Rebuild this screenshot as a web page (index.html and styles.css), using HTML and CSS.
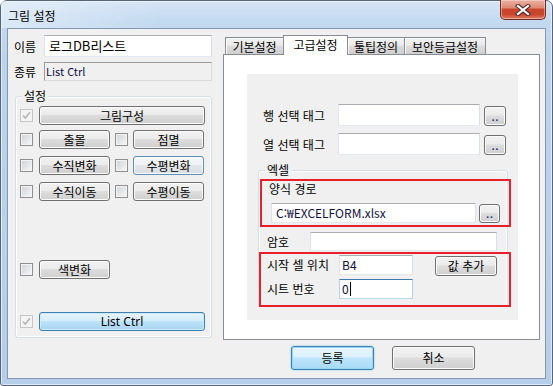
FILE: index.html
```html
<!DOCTYPE html>
<html lang="ko">
<head>
    <meta charset="UTF-8">
    <title>그림 설정</title>
    <link rel="stylesheet" href="styles.css">
</head>
<body>
    <div class="window">
        <div class="titlebar">
            <span class="title">그림 설정</span>
            <div class="close-btn">
                <svg width="16" height="12" viewBox="0 0 16 12">
                    <path d="M3 2 L13 10 M13 2 L3 10" stroke="#4a2a28" stroke-width="4.2" stroke-linecap="square" fill="none"/>
                    <path d="M3 2 L13 10 M13 2 L3 10" stroke="#fff" stroke-width="2.2" stroke-linecap="square" fill="none"/>
                </svg>
            </div>
        </div>

        <div class="client">
            <div class="left-col">
                <div class="field-row">
                    <span class="field-label">이름</span>
                    <div class="edit name-edit">로그DB리스트</div>
                </div>
                <div class="field-row kind-row">
                    <span class="field-label">종류</span>
                    <div class="static-box">List Ctrl</div>
                </div>

                <div class="groupbox setting-group">
                    <span class="group-title">설정</span>
                    <div class="opt-row">
                        <span class="check disabled"><svg width="11" height="11" viewBox="0 0 11 11"><path d="M2 5.5 L4.3 8 L9 2.3" stroke="#b4b4b4" stroke-width="1.5" fill="none"/></svg></span>
                        <span class="btn btn-wide">그림구성</span>
                    </div>
                    <div class="opt-row row-2">
                        <span class="check"></span>
                        <span class="btn btn-half">출몰</span>
                        <span class="check check-second"></span>
                        <span class="btn btn-half">점멸</span>
                    </div>
                    <div class="opt-row row-3">
                        <span class="check"></span>
                        <span class="btn btn-half">수직변화</span>
                        <span class="check check-second"></span>
                        <span class="btn btn-half btn-hot">수평변화</span>
                    </div>
                    <div class="opt-row row-3">
                        <span class="check"></span>
                        <span class="btn btn-half">수직이동</span>
                        <span class="check check-second"></span>
                        <span class="btn btn-half">수평이동</span>
                    </div>
                    <div class="opt-row row-5">
                        <span class="check"></span>
                        <span class="btn btn-half">색변화</span>
                    </div>
                    <div class="opt-row row-6">
                        <span class="check disabled"><svg width="11" height="11" viewBox="0 0 11 11"><path d="M2 5.5 L4.3 8 L9 2.3" stroke="#b4b4b4" stroke-width="1.5" fill="none"/></svg></span>
                        <span class="btn btn-wide btn-default">List Ctrl</span>
                    </div>
                </div>
            </div>

            <div class="right-col">
                <div class="tabs">
                    <span class="tab tab-basic">기본설정</span>
                    <span class="tab tab-active">고급설정</span>
                    <span class="tab tab-tip">툴팁정의</span>
                    <span class="tab tab-security">보안등급설정</span>
                </div>
                <div class="tab-panel">
                    <div class="sub-dialog">
                        <div class="tag-row">
                            <span class="tag-label">행 선택 태그</span>
                            <div class="edit tag-edit"></div>
                            <span class="btn btn-dots">..</span>
                        </div>
                        <div class="tag-row tag-row-2">
                            <span class="tag-label">열 선택 태그</span>
                            <div class="edit tag-edit"></div>
                            <span class="btn btn-dots">..</span>
                        </div>

                        <div class="groupbox excel-group">
                            <span class="group-title">엑셀</span>
                            <div class="mark mark-path">
                                <div class="path-label">양식 경로</div>
                                <div class="path-row">
                                    <div class="edit path-edit">C:₩EXCELFORM.xlsx</div>
                                    <span class="btn btn-dots btn-dots-small">..</span>
                                </div>
                            </div>
                            <div class="pw-row">
                                <span class="pw-label">암호</span>
                                <div class="edit pw-edit"></div>
                            </div>
                            <div class="mark mark-cell">
                                <div class="cell-row">
                                    <span class="cell-label">시작 셀 위치</span>
                                    <div class="edit cell-edit">B4</div>
                                    <span class="btn btn-add">값 추가</span>
                                </div>
                                <div class="cell-row cell-row-2">
                                    <span class="cell-label">시트 번호</span>
                                    <div class="edit cell-edit focused">0<span class="caret"></span></div>
                                </div>
                            </div>
                        </div>
                    </div>
                </div>
                <div class="dialog-buttons">
                    <span class="btn btn-dialog btn-default">등록</span>
                    <span class="btn btn-dialog">취소</span>
                </div>
            </div>
        </div>
    </div>
</body>
</html>
```

FILE: styles.css
```css
* {
    box-sizing: border-box;
}

body {
    margin: 0;
    background-color: #fff;
    font-family: "Noto Sans CJK KR", "Noto Sans", sans-serif;
    font-size: 12px;
    color: #000;
}

.window {
    width: 553px;
    height: 386px;
    border: 1px solid #56657a;
    border-radius: 7px 7px 3px 3px;
    padding: 0 6px 6px;
    display: flex;
    flex-direction: column;
    background: linear-gradient(180deg, #d5e4f4 0px, #c3d9f0 20px, #bcd3ec 60px, #b6cee9 100%);
    box-shadow: inset 0 0 0 1px rgba(255, 255, 255, 0.55);
}

.titlebar {
    height: 27px;
    display: flex;
    justify-content: space-between;
    align-items: flex-start;
    background: linear-gradient(90deg, rgba(236, 244, 252, 0.6) 0px, rgba(255, 255, 255, 0) 160px);
    margin: 0 -6px;
    padding: 0 6px;
}

.title {
    margin: 6px 0 0 1px;
    line-height: 17px;
}

.close-btn {
    width: 46px;
    height: 20px;
    margin-top: -1px;
    border: 1px solid #6b2d26;
    border-top: none;
    border-radius: 0 0 5px 5px;
    background: linear-gradient(180deg, #eab1a4 0%, #dd8a76 40%, #c8452e 50%, #c9442c 75%, #de7f66 100%);
    box-shadow: inset 0 0 0 1px rgba(255, 220, 210, 0.5);
    display: flex;
    justify-content: center;
    align-items: center;
}

.client {
    flex: 1;
    display: flex;
    border: 1px solid #8397ae;
    background-color: #f0f0f0;
}

/* left side */
.left-col {
    width: 204px;
    padding-top: 6px;
}

.field-row {
    display: flex;
    align-items: center;
}

.field-label {
    width: 36px;
    padding-left: 6px;
}

.kind-row {
    margin-top: 5px;
}

.edit {
    background: #fff;
    border: 1px solid;
    border-color: #abadb3 #dbdfe6 #e3e9ef #e2e3ea;
    padding-left: 4px;
    color: #101040;
    white-space: nowrap;
}

.name-edit {
    width: 168px;
    height: 22px;
    font-size: 13px;
    line-height: 20px;
    color: #000;
}

.static-box {
    width: 168px;
    height: 19px;
    border: 1px solid;
    border-color: #9c9c9c #dadada #dadada #9c9c9c;
    line-height: 17px;
    padding-left: 1px;
    font-size: 11px;
    color: #10104a;
}

.groupbox {
    position: relative;
    border: 1px solid #d5dfe5;
    border-radius: 3px;
    box-shadow: inset 0 0 0 1px #fff;
}

.group-title {
    position: absolute;
    top: -9px;
    left: 6px;
    padding: 0 2px;
    background-color: #f0f0f0;
    line-height: 16px;
}

.setting-group {
    margin: 15px 0 0 7px;
    height: 242px;
    padding: 9px 0 0 4px;
}

.opt-row {
    display: flex;
    align-items: center;
    height: 19px;
}

.row-2 {
    margin-top: 5px;
}

.row-3 {
    margin-top: 7px;
}

.row-5 {
    margin-top: 59px;
}

.row-6 {
    margin-top: 33px;
}

.check {
    width: 13px;
    height: 13px;
    margin-right: 6px;
    border: 1px solid #8f8f8f;
    background: linear-gradient(135deg, #cfd2d6 0%, #f7f7f7 100%);
    box-shadow: inset 0 0 0 1px #f4f4f4;
    display: flex;
}

.check-second {
    margin-left: 5px;
    margin-right: 5px;
}

.check.disabled {
    border-color: #c5c5c5;
    background: #f4f4f4;
    box-shadow: none;
}

.btn {
    display: flex;
    justify-content: center;
    align-items: center;
    height: 19px;
    border: 1px solid #707070;
    border-radius: 3px;
    background: linear-gradient(180deg, #f2f2f2 0%, #ebebeb 45%, #dddddd 50%, #cfcfcf 100%);
    box-shadow: inset 0 0 0 1px #fbfbfb;
    line-height: 16px;
    white-space: nowrap;
}

.btn-wide {
    width: 166px;
}

.btn-half {
    width: 71px;
}

.btn-hot {
    border-color: #5d8fb8;
    background: linear-gradient(180deg, #f6f8fa 0%, #eef1f4 45%, #e2e6ea 50%, #d8dde2 100%);
}

.btn-default {
    border-color: #3c7fb1;
    background: linear-gradient(180deg, #e6f4fc 0%, #d6eefb 45%, #bde3f8 50%, #a6d5f2 100%);
    box-shadow: inset 0 0 0 1px #cdeafd;
    font-family: "Noto Sans", sans-serif;
}

/* right side */
.right-col {
    width: 317px;
    margin-left: 11px;
    padding-top: 6px;
}

.tabs {
    display: flex;
    align-items: flex-end;
    height: 19px;
    padding-left: 2px;
}

.tab {
    height: 17px;
    border: 1px solid #898c95;
    border-bottom: none;
    background: linear-gradient(180deg, #f2f2f2 0%, #ebebeb 45%, #dddddd 50%, #cfcfcf 100%);
    box-shadow: inset 1px 1px 0 #fcfcfc;
    display: flex;
    justify-content: center;
    align-items: center;
    line-height: 15px;
}

.tab-basic {
    width: 59px;
}

.tab-active {
    position: relative;
    z-index: 1;
    width: 65px;
    height: 20px;
    margin: 0 0 -1px -1px;
    background: #fff;
    box-shadow: none;
    padding-bottom: 3px;
}

.tab-tip {
    width: 58px;
    margin-left: -1px;
}

.tab-security {
    width: 82px;
    margin-left: -1px;
}

.tab-panel {
    height: 286px;
    border: 1px solid #898c95;
    background-color: #fff;
    padding: 19px 0 0 23px;
}

.sub-dialog {
    width: 271px;
    height: 246px;
    background-color: #f0f0f0;
    padding: 30px 0 0 11px;
}

.tag-row {
    display: flex;
    align-items: center;
    height: 22px;
    margin-left: 5px;
}

.tag-row-2 {
    margin-top: 7px;
}

.tag-label {
    width: 75px;
}

.tag-edit {
    width: 142px;
    height: 22px;
    margin-right: 4px;
}

.btn-dots {
    width: 22px;
    height: 20px;
    margin-top: 1px;
    align-items: flex-end;
    color: #1a2a6a;
    font-family: "Liberation Sans", sans-serif;
    font-weight: bold;
    font-size: 10px;
    line-height: 14px;
    letter-spacing: 1px;
    padding-left: 1px;
}

.excel-group {
    width: 250px;
    height: 137px;
    margin-top: 15px;
    padding-top: 8px;
}

.mark {
    position: relative;
    z-index: 1;
    border: 2px solid #e8202a;
}

.mark-path {
    width: 251px;
    height: 48px;
    margin-left: 1px;
}

.path-label {
    height: 16px;
    line-height: 16px;
    padding-left: 7px;
}

.path-row {
    display: flex;
    margin-top: 6px;
    padding-left: 9px;
}

.path-edit {
    width: 205px;
    height: 20px;
    line-height: 18px;
}

.btn-dots-small {
    width: 21px;
    height: 19px;
    margin-left: 3px;
}

.pw-row {
    display: flex;
    align-items: center;
    margin-top: 5px;
    padding-left: 8px;
}

.pw-label {
    width: 43px;
}

.pw-edit {
    width: 187px;
    height: 19px;
}

.mark-cell {
    width: 252px;
    height: 55px;
    margin-top: 1px;
    padding: 1px 0 0 6px;
}

.cell-row {
    display: flex;
    align-items: flex-start;
}

.cell-row-2 {
    margin-top: 3px;
}

.cell-label {
    width: 72px;
    line-height: 20px;
}

.cell-edit {
    width: 74px;
    height: 20px;
    line-height: 18px;
    padding-left: 2px;
}

.cell-edit.focused {
    border-color: #3d7bad #b5cfe7 #b7d9ed #b5cfe7;
}

.caret {
    display: inline-block;
    width: 1px;
    height: 14px;
    margin-left: 1px;
    vertical-align: -2px;
    background-color: #000;
}

.btn-add {
    width: 62px;
    height: 20px;
    margin: 1px 0 0 22px;
}

.dialog-buttons {
    display: flex;
    gap: 18px;
    margin-top: 6px;
    padding-left: 68px;
}

.btn-dialog {
    width: 83px;
    height: 24px;
}

.dialog-buttons .btn-default {
    font-family: "Noto Sans CJK KR", sans-serif;
    border-color: #3c7fb1;
    background: linear-gradient(180deg, #eaf6fd 0%, #d9f0fc 45%, #bee6fd 50%, #a7d9f5 100%);
    box-shadow: inset 0 0 0 1px #9ad7f4, 0 0 2px #6fc4ee;
}
```
